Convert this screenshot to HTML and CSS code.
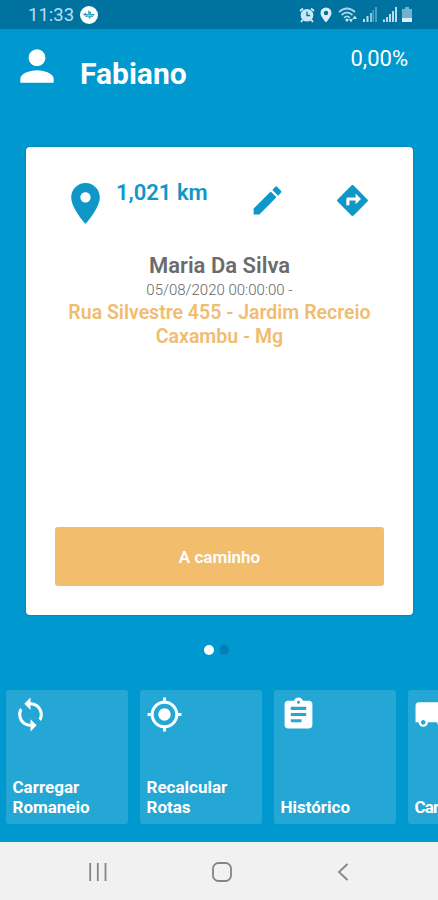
FILE: index.html
```html
<!DOCTYPE html>
<html lang="pt-BR">
<head>
    <meta charset="UTF-8">
    <meta name="viewport" content="width=device-width, initial-scale=1.0">
    <title>Entregas</title>
    <link rel="stylesheet" href="styles.css">
</head>
<body>
    <div class="app">
        <div class="status-bar">
            <span class="clock">11:33</span>
            <svg class="app-badge" viewBox="0 0 18 18">
                <circle cx="9" cy="9" r="9" fill="#fff"/>
                <path d="M3 8.500L6 6.500 6 8 8 8 8 4.500 11 6 11 8 15 8 12 11.500 11 10.500 9.500 13.500 8 10.500 6 11z" fill="#2d9cc4"/>
                <path d="M4 9.500h10M9 5v8" stroke="#fff" stroke-width=".4"/>
            </svg>
            <div class="status-icons">
                <svg width="16" height="16" viewBox="0 0 16 16">
                    <path d="M1 4L4 1.500M12 1.500L15 4M4 12.500L2 15M12 12.500L14 15" stroke="#c9e7f6" stroke-width="2"/>
                    <circle cx="8" cy="8.300" r="6.300" fill="#c9e7f6"/>
                    <path d="M8 4.800V8.500H11" fill="none" stroke="#0072a0" stroke-width="1.300"/>
                </svg>
                <svg width="12" height="16" viewBox="0 0 12 16">
                    <path d="M6 .5a5.500 5.500 0 0 0-5.500 5.500C.5 9.500 6 15.500 6 15.500S11.500 9.500 11.500 6A5.500 5.500 0 0 0 6 .5zM6 8.200a2.200 2.200 0 1 1 0-4.400 2.200 2.200 0 0 1 0 4.400z" fill="#d8effa"/>
                </svg>
                <svg width="20" height="16" viewBox="0 0 20 16">
                    <g fill="none" stroke="#a9d4e8" stroke-width="1.700">
                        <path d="M1 5Q9 -2 17 5M3.500 8Q9 3 14.500 8M6 10.800Q9 8 12 10.800"/>
                    </g>
                    <circle cx="9" cy="13" r="1.600" fill="#c9e7f6"/>
                    <path d="M11 12L13 15.500 15 12zM14.500 12L16.700 8.500 19 12z" fill="#c9e7f6"/>
                </svg>
                <svg width="14" height="15" viewBox="0 0 14 15">
                    <path d="M0 12h2v3H0zM3.500 9h2v6h-2z" fill="#b6dced"/>
                    <path d="M7 6h2v9H7z" fill="#8cc1d9"/>
                    <path d="M9.500 3h1.500v12H9.500zM12 0h2v15h-2z" fill="#4b9fbf"/>
                </svg>
                <svg width="14" height="15" viewBox="0 0 14 15">
                    <path d="M0 12.500h2V15H0zM3 10h2v5H3zM6 7h2v8H6zM9 4h2v11H9zM12 0h2v15h-2z" fill="#b6dced"/>
                </svg>
                <svg width="10" height="15" viewBox="0 0 10 15">
                    <path d="M3 0h4v2h3v9H0V2h3z" fill="#73b2ce"/>
                    <path d="M0 11h10v4H0z" fill="#d8effa"/>
                </svg>
            </div>
        </div>

        <header class="header">
            <svg class="avatar" viewBox="0 0 24 24">
                <path d="M12 12c2.210 0 4-1.790 4-4s-1.790-4-4-4-4 1.790-4 4 1.790 4 4 4zm0 2c-2.670 0-8 1.340-8 4v2h16v-2c0-2.660-5.330-4-8-4z"/>
            </svg>
            <h1 class="name">Fabiano</h1>
            <span class="percent">0,00%</span>
        </header>

        <main class="card">
            <div class="card-top">
                <svg class="pin" viewBox="0 0 24 24">
                    <path d="M12 2C8.130 2 5 5.130 5 9c0 5.250 7 13 7 13s7-7.750 7-13c0-3.870-3.130-7-7-7zm0 9.500c-1.380 0-2.500-1.120-2.500-2.500s1.120-2.500 2.500-2.500 2.500 1.120 2.500 2.500-1.120 2.500-2.500 2.500z"/>
                </svg>
                <span class="distance">1,021 km</span>
                <svg class="edit" viewBox="0 0 24 24">
                    <path d="M3 17.250V21h3.750L17.810 9.940l-3.750-3.750L3 17.250zM20.710 7.040c.390-.390.390-1.020 0-1.410l-2.340-2.340c-.390-.390-1.020-.390-1.410 0l-1.830 1.830 3.750 3.750 1.830-1.830z"/>
                </svg>
                <svg class="directions" viewBox="0 0 24 24">
                    <path d="M21.710 11.290l-9-9c-.390-.390-1.020-.390-1.410 0l-9 9c-.390.390-.390 1.020 0 1.410l9 9c.390.390 1.020.390 1.410 0l9-9c.390-.380.390-1.010 0-1.410zM14 14.500V12h-4v3H8v-4c0-.550.450-1 1-1h5V7.500l3.500 3.500-3.500 3.500z"/>
                </svg>
            </div>
            <h2 class="customer">Maria Da Silva</h2>
            <p class="date">05/08/2020 00:00:00 -</p>
            <p class="address">Rua Silvestre 455 - Jardim Recreio<br>Caxambu - Mg</p>
            <button class="on-way">A caminho</button>
        </main>

        <div class="dots">
            <span class="dot active"></span>
            <span class="dot"></span>
        </div>

        <div class="tiles">
            <div class="tile">
                <svg viewBox="0 0 24 24"><path d="M12 4V1L8 5l4 4V6c3.310 0 6 2.690 6 6 0 1.010-.250 1.970-.700 2.800l1.460 1.460C19.540 15.030 20 13.570 20 12c0-4.420-3.580-8-8-8zm0 14c-3.310 0-6-2.690-6-6 0-1.010.250-1.970.700-2.800L5.240 7.740C4.460 8.970 4 10.430 4 12c0 4.420 3.580 8 8 8v3l4-4-4-4v3z"/></svg>
                <span>Carregar<br>Romaneio</span>
            </div>
            <div class="tile">
                <svg viewBox="0 0 24 24"><path d="M12 8c-2.210 0-4 1.790-4 4s1.790 4 4 4 4-1.790 4-4-1.790-4-4-4zm8.940 3c-.460-4.170-3.770-7.480-7.940-7.940V1h-2v2.060C6.830 3.520 3.520 6.830 3.060 11H1v2h2.060c.460 4.170 3.770 7.480 7.940 7.940V23h2v-2.060c4.170-.460 7.480-3.770 7.940-7.940H23v-2h-2.060zM12 19c-3.870 0-7-3.130-7-7s3.130-7 7-7 7 3.130 7 7-3.130 7-7 7z"/></svg>
                <span>Recalcular<br>Rotas</span>
            </div>
            <div class="tile">
                <svg viewBox="0 0 24 24"><path d="M19 3h-4.180C14.400 1.840 13.300 1 12 1c-1.300 0-2.400.840-2.820 2H5c-1.100 0-2 .900-2 2v14c0 1.100.900 2 2 2h14c1.100 0 2-.900 2-2V5c0-1.100-.900-2-2-2zm-7 0c.550 0 1 .450 1 1s-.450 1-1 1-1-.450-1-1 .450-1 1-1zm2 14H7v-2h7v2zm3-4H7v-2h10v2zm0-4H7V7h10v2z"/></svg>
                <span>Histórico</span>
            </div>
            <div class="tile">
                <svg viewBox="0 0 24 24"><path d="M20 8h-3V4H3c-1.100 0-2 .900-2 2v11h2c0 1.660 1.340 3 3 3s3-1.340 3-3h6c0 1.660 1.340 3 3 3s3-1.340 3-3h2v-5l-3-4zM6 18.500c-.830 0-1.500-.670-1.500-1.500s.670-1.500 1.500-1.500 1.500.670 1.500 1.500-.670 1.500-1.500 1.500z"/></svg>
                <span class="peek">Car</span>
            </div>
        </div>

        <nav class="nav-bar">
            <svg width="18" height="18" viewBox="0 0 18 18"><path d="M1.200 0v18M8.800 0v18M16.500 0v18"/></svg>
            <svg width="20" height="20" viewBox="0 0 20 20"><rect x="1" y="1" width="18" height="18" rx="5.500"/></svg>
            <svg width="12" height="18" viewBox="0 0 12 18"><path d="M10.500 1L2 9l8.500 8"/></svg>
        </nav>
    </div>
</body>
</html>
```
FILE: styles.css
```css
* {
    box-sizing: border-box;
}
body {
    margin: 0;
    font-family: Roboto, sans-serif;
}
h1, h2, p {
    margin: 0;
}
svg {
    display: block;
    flex-shrink: 0;
}
.app {
    width: 438px;
    height: 900px;
    display: flex;
    flex-direction: column;
    overflow: hidden;
    background-color: #0099cf;
}
.status-bar {
    height: 29px;
    padding: 0 26px 0 28px;
    display: flex;
    align-items: center;
    background-color: #0072a0;
    color: #b6dff2;
}
.clock {
    font-size: 18.500px;
    width: 52px;
    padding-top: 1px;
}
.app-badge {
    width: 18px;
    height: 18px;
}
.status-icons {
    margin-left: auto;
    display: flex;
    align-items: center;
    gap: 5.500px;
}
.header {
    height: 118px;
    padding: 12px 30px 0 12px;
    display: flex;
    align-items: flex-start;
    color: #fff;
    fill: #fff;
}
.avatar {
    width: 50px;
    height: 50px;
}
.name {
    margin: 15px 0 0 18px;
    font-size: 30px;
    line-height: 36px;
    font-weight: 700;
}
.percent {
    margin: 4px 0 0 auto;
    font-size: 22px;
    line-height: 27px;
}
.card {
    width: 387px;
    height: 468px;
    margin-left: 26px;
    padding: 32px 29px 29px;
    display: flex;
    flex-direction: column;
    background-color: #fff;
    border-radius: 4px;
    box-shadow: 0 0 2px rgba(0, 60, 90, 0.4);
    text-align: center;
}
.card-top {
    height: 74px;
    padding-left: 6px;
    display: flex;
    align-items: flex-start;
    color: #0f97c7;
    fill: #0f97c7;
}
.pin {
    width: 49px;
    height: 49px;
}
.distance {
    flex: 0 0 139px;
    padding-left: 6px;
    font-size: 22px;
    line-height: 27px;
    font-weight: 600;
    text-align: left;
    white-space: nowrap;
}
.edit, .directions {
    width: 37px;
    height: 37px;
    margin-top: 3px;
}
.directions {
    margin-left: 48px;
}
.customer {
    font-size: 22px;
    line-height: 26px;
    font-weight: 600;
    color: #6b6b6b;
}
.date {
    font-size: 15px;
    line-height: 22px;
    font-weight: 300;
    color: #666;
}
.address {
    font-size: 19.500px;
    line-height: 24px;
    font-weight: 600;
    color: #f0bd70;
    white-space: nowrap;
}
.on-way {
    height: 59px;
    margin-top: auto;
    border: none;
    border-radius: 3px;
    background-color: #f2be6e;
    color: #fff;
    font-family: inherit;
    font-size: 17px;
    font-weight: 600;
}
.dots {
    height: 75px;
    padding: 30px 0 0 204px;
    display: flex;
    gap: 5px;
}
.dot {
    width: 10px;
    height: 10px;
    border-radius: 50%;
    background-color: #007fb5;
}
.dot.active {
    background-color: #fff;
}
.tiles {
    height: 152px;
    padding-left: 6px;
    display: flex;
    align-items: flex-start;
    gap: 12px;
}
.tile {
    flex: 0 0 122px;
    height: 134px;
    padding: 6px 6px 7px;
    display: flex;
    flex-direction: column;
    justify-content: space-between;
    border-radius: 3px;
    background-color: #24a7d5;
    color: #fff;
    fill: #fff;
    font-size: 17px;
    line-height: 20px;
    font-weight: 700;
}
.tile svg {
    width: 37px;
    height: 37px;
}
.tile span {
    padding-left: 0.500px;
}
.peek {
    letter-spacing: -0.800px;
}
.nav-bar {
    height: 58px;
    padding: 2px 89px 0;
    display: flex;
    align-items: center;
    justify-content: space-between;
    background-color: #f1f1f1;
    fill: none;
    stroke: #858585;
    stroke-width: 1.800;
}
```
